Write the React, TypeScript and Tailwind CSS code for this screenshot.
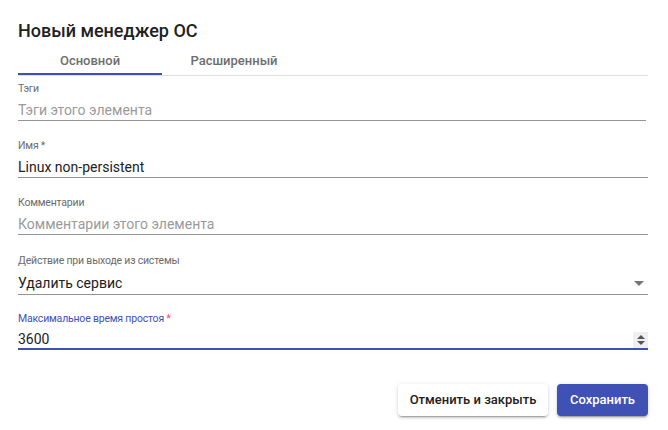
import React from "react";

const font = { fontFamily: "Roboto, 'Noto Sans', sans-serif" };

function Field({
  label,
  required,
  value,
  placeholder,
  className = "",
}: {
  label: string;
  required?: boolean;
  value?: string;
  placeholder?: string;
  className?: string;
}) {
  return (
    <div className={`flex flex-col ${className}`}>
      <div className="h-[13px] text-[10.5px] leading-[13px] text-[#6b6b6b] tracking-[-0.2px]">
        {label}
        {required && <span> *</span>}
      </div>
      <div className="mt-[5px] h-[20px] flex items-center text-[14px] leading-[20px]">
        {value ? (
          <span className="text-[#212121]">{value}</span>
        ) : (
          <span className="text-[#9a9a9a]">{placeholder}</span>
        )}
      </div>
      <div className="h-px bg-[#949494]" />
    </div>
  );
}

export default function App() {
  return (
    <div className="w-[668px] h-[430px] bg-white pl-[18px] pr-[20px] pt-[18px]" style={font}>
      <div className="h-[26px] text-[18px] leading-[26px] font-medium text-[#212121]">
        Новый менеджер ОС
      </div>
      <div className="mt-[4px] flex border-b border-[#e0e0e0]">
        <div className="w-[144px] h-[27px] flex flex-col">
          <div className="flex-1 flex items-center justify-center text-[13px] font-medium text-[#6e6e6e]">
            Основной
          </div>
          <div className="h-[2px] bg-[#3f51b5]" />
        </div>
        <div className="w-[144px] h-[27px] flex items-center justify-center pb-[2px] text-[13px] font-medium text-[#6e6e6e]">
          Расширенный
        </div>
      </div>

      <div className="pt-[6px] flex flex-col gap-[18px]">
        <Field label="Тэги" placeholder="Тэги этого элемента" className="mr-[2px]" />
        <Field label="Имя" required value="Linux non-persistent" />
        <Field label="Комментарии" placeholder="Комментарии этого элемента" />

        <div className="flex flex-col mt-[1px]">
          <div className="h-[13px] text-[10.5px] leading-[13px] text-[#6b6b6b] tracking-[-0.2px]">
            Действие при выходе из системы
          </div>
          <div className="mt-[5px] h-[22px] flex items-center justify-between text-[14px] text-[#212121]">
            <span>Удалить сервис</span>
            <svg width="10" height="5" viewBox="0 0 10 5" className="mr-[4px]">
              <path d="M0 0 L10 0 L5 5 Z" fill="#757575" />
            </svg>
          </div>
          <div className="h-px bg-[#949494]" />
        </div>

        <div className="flex flex-col -mt-[1px]">
          <div className="h-[13px] text-[10.5px] leading-[13px] text-[#3f51b5] tracking-[-0.2px]">
            Максимальное время простоя<span className="text-[#ff4081]"> *</span>
          </div>
          <div className="mt-[6px] h-[17px] flex items-center justify-between text-[14px] text-[#212121]">
            <span>3600</span>
            <div className="w-[15px] h-[16px] bg-[#efefef] flex flex-col items-center justify-center gap-[2px] mt-[1px]">
              <svg width="8" height="4" viewBox="0 0 8 4">
                <path d="M0 4 L8 4 L4 0 Z" fill="#555" />
              </svg>
              <svg width="8" height="4" viewBox="0 0 8 4">
                <path d="M0 0 L8 0 L4 4 Z" fill="#555" />
              </svg>
            </div>
          </div>
          <div className="h-[2px] bg-[#3f51b5]" />
        </div>
      </div>

      <div className="mt-[34px] flex justify-end gap-[9px]">
        <button className="w-[150px] h-[32px] rounded-[4px] bg-white text-[13px] font-medium text-[#212121] shadow-[0_3px_1px_-2px_rgba(0,0,0,0.2),0_2px_2px_0_rgba(0,0,0,0.14),0_1px_5px_0_rgba(0,0,0,0.12)]">
          Отменить и закрыть
        </button>
        <button className="w-[91px] h-[32px] rounded-[4px] bg-[#3f51b5] text-[13px] font-medium text-white shadow-[0_3px_1px_-2px_rgba(0,0,0,0.2),0_2px_2px_0_rgba(0,0,0,0.14),0_1px_5px_0_rgba(0,0,0,0.12)]">
          Сохранить
        </button>
      </div>
    </div>
  );
}
